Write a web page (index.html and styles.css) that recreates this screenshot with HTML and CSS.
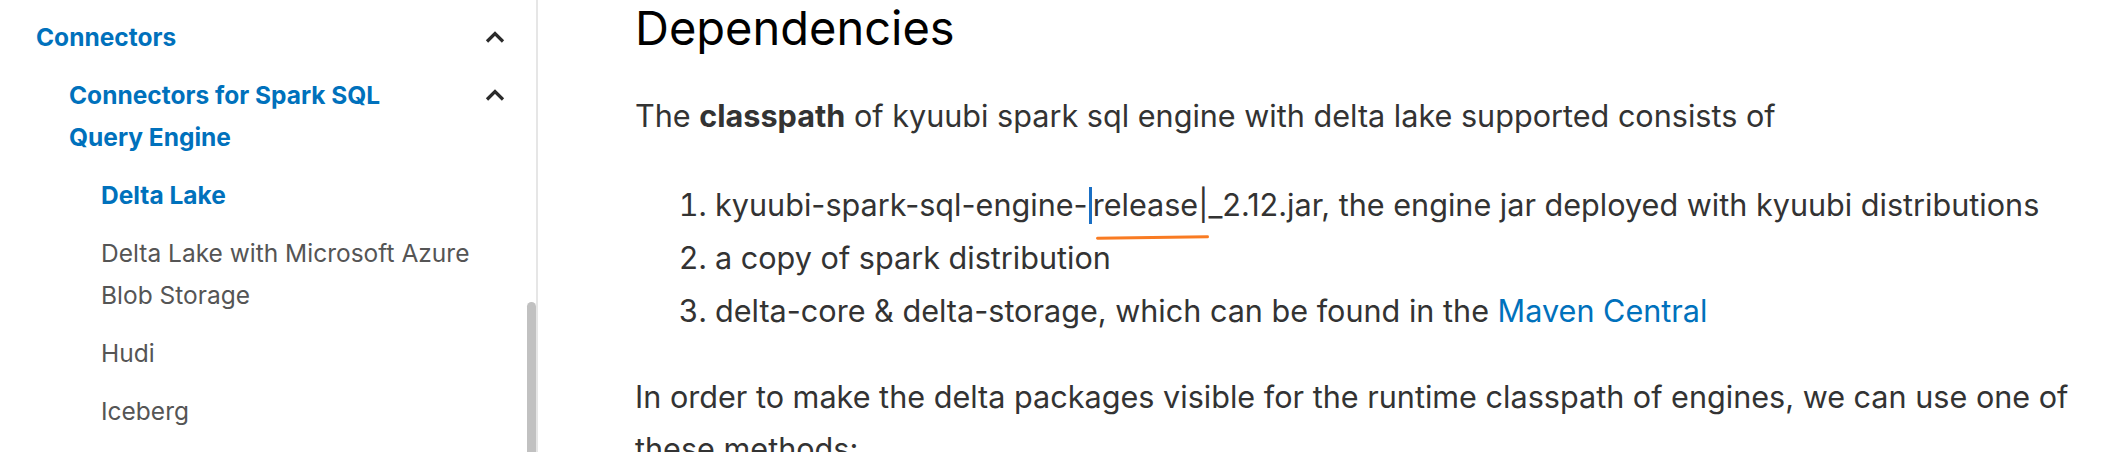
FILE: index.html
```html
<!DOCTYPE html>
<html lang="en">
<head>
<meta charset="utf-8">
<title>Delta Lake - Kyuubi</title>
<link rel="stylesheet" href="styles.css">
</head>
<body>
<div class="page">
  <aside class="sidebar">
    <ul class="nav lvl1">
      <li>
        <div class="row">
          <a class="link current">Connectors</a>
          <span class="toggle"><svg viewBox="0 0 20 12" width="20" height="12"><path d="M2 10.5 L10 2.5 L18 10.5" fill="none" stroke="#2b2b2b" stroke-width="3.2"/></svg></span>
        </div>
        <ul class="nav lvl2">
          <li>
            <div class="row">
              <a class="link current">Connectors for Spark SQL Query Engine</a>
              <span class="toggle"><svg viewBox="0 0 20 12" width="20" height="12"><path d="M2 10.5 L10 2.5 L18 10.5" fill="none" stroke="#2b2b2b" stroke-width="3.2"/></svg></span>
            </div>
            <ul class="nav lvl3">
              <li><div class="row"><a class="link current">Delta Lake</a></div></li>
              <li><div class="row"><a class="link">Delta Lake with Microsoft Azure Blob Storage</a></div></li>
              <li><div class="row"><a class="link">Hudi</a></div></li>
              <li><div class="row"><a class="link">Iceberg</a></div></li>
            </ul>
          </li>
        </ul>
      </li>
    </ul>
    <div class="scroll-thumb"></div>
  </aside>
  <main class="content">
    <h2 class="title">Dependencies</h2>
    <p class="para">The <strong>classpath</strong> of kyuubi spark sql engine with delta lake supported consists of</p>
    <ol class="deps">
      <li>kyuubi-spark-sql-engine-<span class="caret"></span><span class="flag">release|</span>_2.12.jar, the engine jar deployed with kyuubi distributions</li>
      <li>a copy of spark distribution</li>
      <li>delta-core &amp; delta-storage, which can be found in the <a class="ext">Maven Central</a></li>
    </ol>
    <p class="para">In order to make the delta packages visible for the runtime classpath of engines, we can use one of these methods:</p>
  </main>
</div>
</body>
</html>
```

FILE: styles.css
```css
html, body {
  margin: 0;
  padding: 0;
  background: #fff;
  overflow: hidden;
}
body {
  font-family: Inter, "Noto Sans", "Liberation Sans", sans-serif;
  color: #333;
}
.page {
  display: flex;
  align-items: flex-start;
  height: 452px;
}
.sidebar {
  position: relative;
  box-sizing: border-box;
  width: 538px;
  height: 452px;
  flex: none;
  border-right: 2px solid #e6e6e6;
  padding: 8px 16px 0 36px;
}
.nav {
  list-style: none;
  margin: 0;
  padding: 0;
}
.lvl2 { padding-left: 33px; }
.lvl3 { padding-left: 32px; padding-right: 14px; }
.row {
  display: flex;
  align-items: flex-start;
  padding: 8px 0;
}
.link {
  flex: 1;
  font-size: 24.5px;
  line-height: 42px;
  color: #555;
  text-decoration: none;
}
.link.current {
  color: #0071bc;
  font-weight: 700;
}
.toggle {
  flex: none;
  width: 50px;
  height: 42px;
  display: flex;
  align-items: center;
  justify-content: center;
}
.lvl2 .toggle {
  width: 64px;
  justify-content: flex-end;
  padding-right: 15px;
  box-sizing: border-box;
}
.scroll-thumb {
  position: absolute;
  right: 0;
  top: 302px;
  width: 9px;
  height: 160px;
  border-radius: 5px;
  background: #c1c1c1;
}
.content {
  flex: 1;
  padding-left: 97px;
  padding-right: 30px;
}
.title {
  margin: 2px 0 36px;
  font-size: 47px;
  font-weight: 400;
  line-height: 52px;
  color: #000;
}
.para {
  margin: 0 0 24px;
  font-size: 30.6px;
  line-height: 52px;
  color: #333;
}
.para strong { font-weight: 700; }
.deps {
  margin: 36px 0 34px;
  padding-left: 80px;
  font-size: 30.6px;
  line-height: 53px;
  color: #333;
}
.deps li { padding-left: 0; }
.caret {
  display: inline-block;
  width: 3px;
  height: 37px;
  margin: 0 1px 0 1px;
  background: #1a6fc4;
  vertical-align: -8px;
}
.flag {
  position: relative;
}
.flag::after {
  content: "";
  position: absolute;
  left: 3px;
  right: 0;
  bottom: -16px;
  height: 3px;
  border-radius: 2px;
  background: #f97b22;
  transform: rotate(-0.8deg);
}
.ext {
  color: #0071bc;
  text-decoration: none;
}
```
